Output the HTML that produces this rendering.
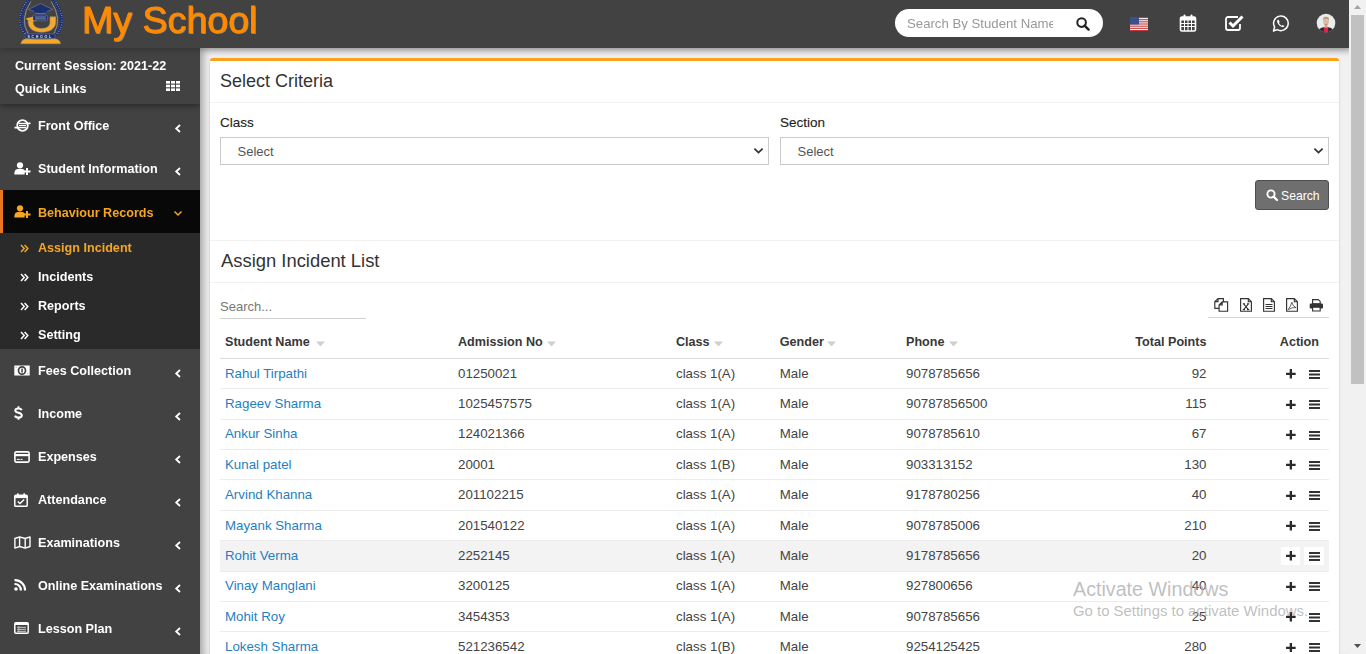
<!DOCTYPE html>
<html><head><meta charset="utf-8">
<style>
*{box-sizing:border-box;margin:0;padding:0}
html,body{width:1366px;height:654px;overflow:hidden;background:#f1f1f1;font-family:"Liberation Sans",sans-serif;}
.a{position:absolute;white-space:nowrap;line-height:1}
#hdr{position:absolute;left:0;top:0;width:1349px;height:48px;background:#424242;z-index:5;box-shadow:0 2px 6px rgba(0,0,0,.2)}
#sb{position:absolute;left:0;top:0;width:200px;height:654px;will-change:transform;background:#424242;z-index:4;overflow:hidden}
#main{position:absolute;left:200px;top:48px;width:1149px;height:606px;background:#f1f1f1;overflow:hidden;box-shadow:inset 6px 4px 8px -3px rgba(0,0,0,.35)}
#scroll{position:absolute;left:1349px;top:0;width:17px;height:654px;background:#f1f1f1;z-index:6}
#box{position:absolute;left:10px;top:10px;width:1129px;height:700px;background:#fff;border-top:3px solid #f9a11b;border-radius:3px;box-shadow:0 1px 2px rgba(0,0,0,.25)}
.hl{position:absolute;left:0;width:1129px;height:1px;background:#f0f0f0}
#ct{position:absolute;left:0;top:0;width:1349px;height:654px;z-index:3;overflow:hidden}
.ln{position:absolute;left:210px;width:1129px;height:1px;background:#f2f2f2}
.rl{position:absolute;left:220px;width:1109px;height:1px;background:#ececec}
.sel{position:absolute;top:137px;height:28px;border:1px solid #cacaca;background:#fff}
</style></head><body>

<div id="hdr">
  <svg style="position:absolute;left:0;top:0" width="80" height="48" viewBox="0 0 80 48">
    <path d="M28 33.5 Q19.5 19 30.8 1.5 M54 33.5 Q62.5 19 51.2 1.5" fill="none" stroke="#9a9a9a" stroke-width="0.9"/>
    <path d="M25.2 33.5 Q15.2 19 28 1.2 M56.8 33.5 Q66.8 19 54 1.2" fill="none" stroke="#1d2f6f" stroke-width="3.8" stroke-linecap="round"/>
    <path d="M25.2 33.5 Q15.2 19 28 1.2 M56.8 33.5 Q66.8 19 54 1.2" fill="none" stroke="#c8cde0" stroke-width="3" stroke-dasharray="0.7 1.6" opacity="0.75"/>
    <path d="M25.4 33 Q15.6 19 28.2 1.6 M56.6 33 Q66.4 19 53.8 1.6" fill="none" stroke="#1d2f6f" stroke-width="1.2"/>
    <path fill="#f6a829" stroke="#8f8f8f" stroke-width="0.5" d="M28 20 C27.5 29 34 32.2 41.7 32.2 C50 32.2 56 28.5 55.8 21 L55.8 16.8 L50 16.8 L50 22 C50 26.5 46.5 28.4 41.7 28.4 C36.5 28.4 33.2 26 33.2 22.5 L33.2 21 Z"/>
    <path d="M25.5 18.5 L37 15.8 L37 21 L33.2 21.2 L28 20.2 Z" fill="#f6a829"/>
    <path d="M28.2 9.5 L40.5 3.6 L52.8 9.5 L40.5 13.6 Z" fill="#1d2f6f" stroke="#8f96a8" stroke-width="0.5"/>
    <path d="M34 10.8 L47 10.8 L47 14.2 Q40.5 15.4 34 14.2 Z" fill="#1d2f6f"/>
    <path d="M34.5 13.1 Q40.5 14.2 46.5 13.1" fill="none" stroke="#9aa3bd" stroke-width="0.6"/>
    <rect x="33" y="15" width="14.6" height="5.8" rx="1.6" fill="#1d2f6f" stroke="#9aa3bd" stroke-width="0.4"/>
    <path d="M35 17 H46 M35 18.9 H46" stroke="#c3c9dc" stroke-width="0.6"/>
    <rect x="25.2" y="34" width="30" height="4.6" rx="1.2" fill="#1d2f6f" stroke="#8f8f8f" stroke-width="0.4"/>
    <text x="40.2" y="37.9" font-size="3.6" font-family="Liberation Sans" font-weight="bold" fill="#dfe3ee" text-anchor="middle" letter-spacing="1.7">SCHOOL</text>
    <path d="M20.8 43.8 Q21.5 39.5 26 38.8 Q40.5 39.8 55 38.8 Q60 39.5 60.6 43.8 Z" fill="#f6a829" stroke="#8a8a8a" stroke-width="0.5"/>
  </svg>
  <div class="a" style="left:82px;top:0px;font-size:37.6px;line-height:40px;color:#ff8a00;-webkit-text-stroke:0.9px #ff8a00;text-shadow:1px 1px 0 rgba(150,150,150,.8)">My School</div>
  <div style="position:absolute;left:895px;top:9px;width:208px;height:28px;border-radius:14px;background:#fff;overflow:hidden">
    <div class="a" style="left:12px;top:8px;font-size:13.2px;color:#999;width:146px;overflow:hidden">Search By Student Name</div>
    <svg style="position:absolute;left:181px;top:8px" width="14" height="14" viewBox="0 0 14 14"><circle cx="5.6" cy="5.6" r="4.3" fill="none" stroke="#222" stroke-width="2"/><path d="M8.6 8.6 L12.6 12.6" stroke="#222" stroke-width="2.4" stroke-linecap="round"/></svg>
  </div>
  <svg style="position:absolute;left:1130px;top:17px" width="18" height="14" viewBox="0 0 18 14">
    <rect width="18" height="14" fill="#fff"/>
    <g fill="#c0393b"><rect y="0" width="18" height="1.1"/><rect y="2.15" width="18" height="1.1"/><rect y="4.3" width="18" height="1.1"/><rect y="6.45" width="18" height="1.1"/><rect y="8.6" width="18" height="1.1"/><rect y="10.75" width="18" height="1.1"/><rect y="12.9" width="18" height="1.1"/></g>
    <rect width="9" height="7.5" fill="#3b4f8c"/>
  </svg>
  <svg style="position:absolute;left:1179px;top:14px" width="18" height="18" viewBox="0 0 18 18">
    <rect x="1.5" y="3" width="15" height="14" rx="1.5" fill="none" stroke="#fff" stroke-width="1.6"/>
    <rect x="1.5" y="3" width="15" height="3.5" fill="#fff"/>
    <rect x="4.5" y="0.5" width="2" height="4" rx="1" fill="#fff"/><rect x="11.5" y="0.5" width="2" height="4" rx="1" fill="#fff"/>
    <g fill="#fff"><rect x="1.5" y="9" width="15" height="1"/><rect x="1.5" y="12" width="15" height="1"/><rect x="5" y="6" width="1" height="11"/><rect x="8.5" y="6" width="1" height="11"/><rect x="12" y="6" width="1" height="11"/></g>
  </svg>
  <svg style="position:absolute;left:1225px;top:15px" width="19" height="16" viewBox="0 0 19 16">
    <path d="M13 2 H3 A2 2 0 0 0 1 4 V13 A2 2 0 0 0 3 15 H13 A2 2 0 0 0 15 13 V9" fill="none" stroke="#fff" stroke-width="1.8"/>
    <path d="M4.5 7.5 L8 11 L17.5 1.5" fill="none" stroke="#fff" stroke-width="3"/>
  </svg>
  <svg style="position:absolute;left:1272px;top:15px" width="17" height="17" viewBox="0 0 17 17">
    <path d="M1.5 16 L2.6 12 A7.3 7.3 0 1 1 5.2 14.6 Z" fill="none" stroke="#fff" stroke-width="1.5" stroke-linejoin="round"/>
    <path d="M6 4.8 C5 5.2 4.8 6.5 5.5 8 C6.5 10 8 11.3 10 12 C11.3 12.4 12 11.8 12.3 11 L10.8 10 L9.8 10.7 C8.6 10.2 7.5 9 7 8 L7.6 7 L6.8 4.9 Z" fill="#fff"/>
  </svg>
  <svg style="position:absolute;left:1316px;top:13px" width="20" height="20" viewBox="0 0 20 20">
    <defs><clipPath id="av"><circle cx="10" cy="10" r="9.3"/></clipPath></defs>
    <g clip-path="url(#av)">
      <rect width="20" height="20" fill="#ebebeb"/>
      <path d="M1 20 Q2.5 14.8 8 14.2 L12 14.2 Q17.5 14.8 19 20 Z" fill="#2a2a2a"/>
      <path d="M7.6 20 L8 14.6 L12 14.6 L12.4 20 Z" fill="#e8204a"/>
      <rect x="8.6" y="11" width="2.8" height="3.8" fill="#c9a58c"/>
      <ellipse cx="10" cy="8.3" rx="2.9" ry="3.9" fill="#dcbaa3"/>
      <path d="M7 7.2 Q6.8 3.8 10 3.8 Q13.2 3.8 13 7.2 Q12.2 5.4 10 5.5 Q7.8 5.4 7 7.2Z" fill="#b89470"/>
      <path d="M8.6 11.2 Q10 12 11.4 11.2" fill="none" stroke="#8a6a5a" stroke-width="0.5"/>
    </g>
  </svg>
</div>

<div id="sb">
<div style="position:absolute;left:0;top:48px;width:200px;height:56px;background:#424242;box-shadow:0 3px 5px rgba(0,0,0,.3);z-index:1"></div>
<div style="position:absolute;left:0;top:48px;width:200px;height:56px;z-index:2">
</div>
<div class="a" style="left:15px;top:59.53px;font-size:12.6px;color:#fff;font-weight:bold;z-index:3">Current Session: 2021-22</div>
<div class="a" style="left:15px;top:83.23px;font-size:12.6px;color:#fff;font-weight:bold;z-index:3">Quick Links</div>
<svg style="position:absolute;left:166px;top:81px;z-index:3" width="14" height="10" viewBox="0 0 14 10"><g fill="#fff"><rect x="0" y="0" width="4" height="2.6"/><rect x="5" y="0" width="4" height="2.6"/><rect x="10" y="0" width="4" height="2.6"/><rect x="0" y="3.7" width="4" height="2.6"/><rect x="5" y="3.7" width="4" height="2.6"/><rect x="10" y="3.7" width="4" height="2.6"/><rect x="0" y="7.4" width="4" height="2.6"/><rect x="5" y="7.4" width="4" height="2.6"/><rect x="10" y="7.4" width="4" height="2.6"/></g></svg>
<div class="a" style="left:38px;top:120.33px;font-size:12.6px;color:#fff;font-weight:bold;">Front Office</div>
<svg style="position:absolute;left:14px;top:119px" width="17" height="13" viewBox="0 0 17 13"><circle cx="8.5" cy="6.5" r="5.3" fill="none" stroke="#fff" stroke-width="1.8"/><rect x="5" y="3.8" width="7" height="1.3" fill="#fff"/><rect x="5" y="5.9" width="7" height="1.3" fill="#fff"/><rect x="5" y="8" width="7" height="1.3" fill="#fff"/><path d="M0.5 8.6 L5 8.6 M12 4.4 L16.5 4.4" stroke="#fff" stroke-width="1.6"/></svg>
<svg style="position:absolute;left:174px;top:124px" width="8" height="9" viewBox="0 0 8 9"><path d="M6 1 L2.2 4.5 L6 8" fill="none" stroke="#fff" stroke-width="1.8"/></svg>
<div class="a" style="left:38px;top:163.33px;font-size:12.6px;color:#fff;font-weight:bold;">Student Information</div>
<svg style="position:absolute;left:14px;top:162px" width="17" height="13" viewBox="0 0 17 13"><circle cx="6" cy="3.3" r="3.1" fill="#fff"/><path d="M0.3 12.5 Q0.3 7.4 3.5 7 L8.5 7 Q10 7.2 10.6 8.2 L10.6 12.5 Z" fill="#fff"/><path d="M9.5 9.5 H16.5 M13 6 V13" stroke="#fff" stroke-width="2"/></svg>
<svg style="position:absolute;left:174px;top:167px" width="8" height="9" viewBox="0 0 8 9"><path d="M6 1 L2.2 4.5 L6 8" fill="none" stroke="#fff" stroke-width="1.8"/></svg>
<div style="position:absolute;left:0;top:190px;width:200px;height:43px;background:#080808;border-left:3px solid #e8761e"></div>
<div class="a" style="left:38px;top:206.83px;font-size:12.6px;color:#f5a623;font-weight:bold;">Behaviour Records</div>
<svg style="position:absolute;left:14px;top:205px" width="17" height="13" viewBox="0 0 17 13"><circle cx="6" cy="3.3" r="3.1" fill="#f5a623"/><path d="M0.3 12.5 Q0.3 7.4 3.5 7 L8.5 7 Q10 7.2 10.6 8.2 L10.6 12.5 Z" fill="#f5a623"/><path d="M9.5 9.5 H16.5 M13 6 V13" stroke="#f5a623" stroke-width="2"/></svg>
<svg style="position:absolute;left:173px;top:210px" width="10" height="7" viewBox="0 0 10 7"><path d="M1.5 1.5 L5 5 L8.5 1.5" fill="none" stroke="#f5a623" stroke-width="1.5"/></svg>
<div style="position:absolute;left:0;top:233px;width:200px;height:116px;background:#2a2a2a"></div>
<div class="a" style="left:38px;top:242.13px;font-size:12.6px;color:#f5a623;font-weight:bold;">Assign Incident</div>
<svg style="position:absolute;left:20px;top:243.6px" width="9" height="9" viewBox="0 0 9 9"><path d="M1 1 L4.2 4.5 L1 8 M4.6 1 L7.8 4.5 L4.6 8" fill="none" stroke="#f5a623" stroke-width="1.5"/></svg>
<div class="a" style="left:38px;top:271.13px;font-size:12.6px;color:#fff;font-weight:bold;">Incidents</div>
<svg style="position:absolute;left:20px;top:272.6px" width="9" height="9" viewBox="0 0 9 9"><path d="M1 1 L4.2 4.5 L1 8 M4.6 1 L7.8 4.5 L4.6 8" fill="none" stroke="#fff" stroke-width="1.5"/></svg>
<div class="a" style="left:38px;top:300.13px;font-size:12.6px;color:#fff;font-weight:bold;">Reports</div>
<svg style="position:absolute;left:20px;top:301.6px" width="9" height="9" viewBox="0 0 9 9"><path d="M1 1 L4.2 4.5 L1 8 M4.6 1 L7.8 4.5 L4.6 8" fill="none" stroke="#fff" stroke-width="1.5"/></svg>
<div class="a" style="left:38px;top:329.13px;font-size:12.6px;color:#fff;font-weight:bold;">Setting</div>
<svg style="position:absolute;left:20px;top:330.6px" width="9" height="9" viewBox="0 0 9 9"><path d="M1 1 L4.2 4.5 L1 8 M4.6 1 L7.8 4.5 L4.6 8" fill="none" stroke="#fff" stroke-width="1.5"/></svg>
<div class="a" style="left:38px;top:365.33px;font-size:12.6px;color:#fff;font-weight:bold;">Fees Collection</div>
<svg style="position:absolute;left:14px;top:365px" width="16" height="11" viewBox="0 0 16 11"><rect x="0.3" y="0.5" width="15.4" height="10" fill="#fff"/><ellipse cx="8" cy="5.5" rx="3.5" ry="3.7" fill="none" stroke="#424242" stroke-width="1.7"/><rect x="7.3" y="3.6" width="1.5" height="3.9" fill="#424242"/><rect x="1.6" y="1.8" width="1.2" height="1.2" fill="#bbb"/><rect x="13.2" y="8" width="1.2" height="1.2" fill="#bbb"/></svg>
<svg style="position:absolute;left:174px;top:369px" width="8" height="9" viewBox="0 0 8 9"><path d="M6 1 L2.2 4.5 L6 8" fill="none" stroke="#fff" stroke-width="1.8"/></svg>
<div class="a" style="left:38px;top:408.33px;font-size:12.6px;color:#fff;font-weight:bold;">Income</div>
<svg style="position:absolute;left:14px;top:406px" width="9" height="14" viewBox="0 0 9 14"><path d="M7.6 4.2 Q7.2 2.4 4.5 2.4 Q1.3 2.4 1.3 4.4 Q1.3 6 4.5 6.8 Q7.8 7.6 7.8 9.5 Q7.8 11.6 4.5 11.6 Q1.6 11.6 1 9.6" fill="none" stroke="#fff" stroke-width="2"/><path d="M4.5 0.3 V2.6 M4.5 11.4 V13.7" stroke="#fff" stroke-width="1.8"/></svg>
<svg style="position:absolute;left:174px;top:412px" width="8" height="9" viewBox="0 0 8 9"><path d="M6 1 L2.2 4.5 L6 8" fill="none" stroke="#fff" stroke-width="1.8"/></svg>
<div class="a" style="left:38px;top:451.33px;font-size:12.6px;color:#fff;font-weight:bold;">Expenses</div>
<svg style="position:absolute;left:14px;top:451px" width="16" height="12" viewBox="0 0 16 12"><rect x="0.9" y="0.9" width="14.2" height="10.2" rx="1.3" fill="none" stroke="#fff" stroke-width="1.6"/><rect x="1" y="3" width="14" height="2.2" fill="#fff"/><rect x="2.8" y="7.9" width="3" height="1" fill="#fff"/><rect x="6.5" y="7.9" width="2" height="1" fill="#fff"/></svg>
<svg style="position:absolute;left:174px;top:455px" width="8" height="9" viewBox="0 0 8 9"><path d="M6 1 L2.2 4.5 L6 8" fill="none" stroke="#fff" stroke-width="1.8"/></svg>
<div class="a" style="left:38px;top:494.33px;font-size:12.6px;color:#fff;font-weight:bold;">Attendance</div>
<svg style="position:absolute;left:14px;top:493px" width="14" height="14" viewBox="0 0 14 14"><rect x="0.8" y="2.3" width="12.4" height="11" rx="1" fill="none" stroke="#fff" stroke-width="1.5"/><rect x="0.8" y="2.3" width="12.4" height="2.8" fill="#fff"/><rect x="3" y="0.3" width="1.6" height="3" fill="#fff"/><rect x="9.4" y="0.3" width="1.6" height="3" fill="#fff"/><path d="M3.8 8.5 L6 10.6 L10.2 6.6" fill="none" stroke="#fff" stroke-width="1.4"/></svg>
<svg style="position:absolute;left:174px;top:498px" width="8" height="9" viewBox="0 0 8 9"><path d="M6 1 L2.2 4.5 L6 8" fill="none" stroke="#fff" stroke-width="1.8"/></svg>
<div class="a" style="left:38px;top:537.33px;font-size:12.6px;color:#fff;font-weight:bold;">Examinations</div>
<svg style="position:absolute;left:14px;top:536px" width="17" height="13" viewBox="0 0 17 13"><path d="M0.9 2.5 L5.6 0.9 L11.2 2.5 L16 0.9 L16 10.5 L11.2 12.1 L5.6 10.5 L0.9 12.1 Z M5.6 0.9 V10.5 M11.2 2.5 V12.1" fill="none" stroke="#fff" stroke-width="1.4" stroke-linejoin="round"/></svg>
<svg style="position:absolute;left:174px;top:541px" width="8" height="9" viewBox="0 0 8 9"><path d="M6 1 L2.2 4.5 L6 8" fill="none" stroke="#fff" stroke-width="1.8"/></svg>
<div class="a" style="left:38px;top:580.33px;font-size:12.6px;color:#fff;font-weight:bold;">Online Examinations</div>
<svg style="position:absolute;left:14px;top:579px" width="13" height="12" viewBox="0 0 13 12"><circle cx="2" cy="10" r="1.8" fill="#fff"/><path d="M0.5 5 A6 6 0 0 1 6.8 11.5" fill="none" stroke="#fff" stroke-width="2.2"/><path d="M0.5 1.2 A10 10 0 0 1 11 11.5" fill="none" stroke="#fff" stroke-width="2.2"/></svg>
<svg style="position:absolute;left:174px;top:584px" width="8" height="9" viewBox="0 0 8 9"><path d="M6 1 L2.2 4.5 L6 8" fill="none" stroke="#fff" stroke-width="1.8"/></svg>
<div class="a" style="left:38px;top:623.33px;font-size:12.6px;color:#fff;font-weight:bold;">Lesson Plan</div>
<svg style="position:absolute;left:14px;top:622px" width="15" height="12" viewBox="0 0 15 12"><rect x="0.8" y="0.8" width="13.4" height="10.4" rx="1" fill="none" stroke="#fff" stroke-width="1.5"/><rect x="1" y="1" width="13" height="2" fill="#fff"/><rect x="3" y="4.8" width="9" height="1" fill="#ccc"/><rect x="3" y="6.8" width="9" height="1" fill="#ccc"/><rect x="3" y="8.8" width="9" height="1" fill="#ccc"/><rect x="4.5" y="4" width="0.8" height="6" fill="#ccc"/></svg>
<svg style="position:absolute;left:174px;top:627px" width="8" height="9" viewBox="0 0 8 9"><path d="M6 1 L2.2 4.5 L6 8" fill="none" stroke="#fff" stroke-width="1.8"/></svg>
</div>

<div id="main">
  <div id="box"></div>
</div>
<div id="ct">
<div class="a" style="left:220px;top:72.06px;font-size:18px;color:#333;font-weight:normal;">Select Criteria</div>
<div class="ln" style="top:102px"></div>
<div class="a" style="left:220px;top:115.57px;font-size:13.5px;color:#222;font-weight:normal;-webkit-text-stroke:0.12px #222">Class</div>
<div class="a" style="left:780px;top:115.57px;font-size:13.5px;color:#222;font-weight:normal;-webkit-text-stroke:0.12px #222">Section</div>
<div class="sel" style="left:220px;width:549px"></div>
<div class="a" style="left:237.5px;top:145.00px;font-size:13px;color:#555;font-weight:normal;">Select</div>
<svg style="position:absolute;left:753px;top:147px" width="11" height="8" viewBox="0 0 11 8"><path d="M1.4 1.6 L5.5 5.6 L9.6 1.6" fill="none" stroke="#333" stroke-width="1.7"/></svg>
<div class="sel" style="left:780px;width:549px"></div>
<div class="a" style="left:797.5px;top:145.00px;font-size:13px;color:#555;font-weight:normal;">Select</div>
<svg style="position:absolute;left:1313px;top:147px" width="11" height="8" viewBox="0 0 11 8"><path d="M1.4 1.6 L5.5 5.6 L9.6 1.6" fill="none" stroke="#333" stroke-width="1.7"/></svg>
<div style="position:absolute;left:1255px;top:180px;width:74px;height:30px;background:#6f6f6f;border:1px solid #4f4f4f;border-radius:3px"></div>
<svg style="position:absolute;left:1266px;top:189px" width="12" height="12" viewBox="0 0 12 12"><circle cx="5" cy="5" r="3.6" fill="none" stroke="#fff" stroke-width="1.9"/><path d="M7.6 7.6 L11 11" stroke="#fff" stroke-width="2.2" stroke-linecap="round"/></svg>
<div class="a" style="left:1281px;top:190.33px;font-size:12.2px;color:#fff;font-weight:normal;">Search</div>
<div class="ln" style="top:240px"></div>
<div class="a" style="left:221px;top:252.02px;font-size:18.4px;color:#333;font-weight:normal;">Assign Incident List</div>
<div class="ln" style="top:282px"></div>
<div class="a" style="left:220px;top:300.00px;font-size:13px;color:#777;font-weight:normal;">Search...</div>
<div style="position:absolute;left:220px;top:318px;width:146px;height:1px;background:#d0d0d0"></div>
<div style="position:absolute;left:1208px;top:317px;width:121px;height:1px;background:#d6d6d6"></div>
<svg style="position:absolute;left:1213px;top:297px" width="112" height="16" viewBox="0 0 112 16">
<g fill="#fff" stroke="#333" stroke-width="1.15" stroke-linejoin="miter">
<path d="M1.8 4.6 L5 1.6 H10.4 V11.4 H1.8 Z M5 1.6 V4.6 H1.8"/>
<path d="M6.1 7.9 L9.2 4.9 H14.6 V14.2 H6.1 Z M9.2 4.9 V7.9 H6.1"/>
<path d="M27.6 1.6 H35.3 L38.4 4.7 V14.2 H27.6 Z M35.3 1.6 V4.7 H38.4"/>
<path d="M50.6 1.6 H58.3 L61.4 4.7 V14.2 H50.6 Z M58.3 1.6 V4.7 H61.4"/>
<path d="M73.6 1.6 H81.3 L84.4 4.7 V14.2 H73.6 Z M81.3 1.6 V4.7 H84.4"/>
</g>
<path d="M30.6 6.8 L35.4 12.6 M35.4 6.8 L30.6 12.6 M29.8 6.8 H32 M34 6.8 H36.2 M29.8 12.6 H32 M34 12.6 H36.2" stroke="#333" stroke-width="1.1"/>
<path d="M52.5 7.5 H59.5 M52.5 9.5 H59.5 M52.5 11.5 H59.5" stroke="#333" stroke-width="1"/>
<path d="M75.2 12.6 Q77.8 9.5 78.8 5.2 Q79.8 9.6 83 10.6 Q79 10.2 75.2 12.6 Z" fill="none" stroke="#333" stroke-width="0.75"/>
<path d="M99.6 2.6 H105.2 L107.2 4.4 V6.8 H99.6 Z" fill="#fff" stroke="#333" stroke-width="1.15"/>
<rect x="96.7" y="6.5" width="13.3" height="5" rx="1.2" fill="#333"/>
<path d="M99.6 10.2 H107.2 V14 H99.6 Z" fill="#fff" stroke="#333" stroke-width="1.15"/>
</svg>
<div class="a" style="left:225px;top:336.2px;font-size:12.6px;color:#383838;font-weight:bold;">Student Name</div>
<svg style="position:absolute;left:315.5px;top:341px" width="9" height="6" viewBox="0 0 9 6"><path d="M0 0.5 H9 L4.5 5.5 Z" fill="#d0d0d0"/></svg>
<div class="a" style="left:458px;top:336.2px;font-size:12.6px;color:#383838;font-weight:bold;">Admission No</div>
<svg style="position:absolute;left:546.6px;top:341px" width="9" height="6" viewBox="0 0 9 6"><path d="M0 0.5 H9 L4.5 5.5 Z" fill="#d0d0d0"/></svg>
<div class="a" style="left:676px;top:336.2px;font-size:12.6px;color:#383838;font-weight:bold;">Class</div>
<svg style="position:absolute;left:713.5px;top:341px" width="9" height="6" viewBox="0 0 9 6"><path d="M0 0.5 H9 L4.5 5.5 Z" fill="#d0d0d0"/></svg>
<div class="a" style="left:779.8px;top:336.2px;font-size:12.6px;color:#383838;font-weight:bold;">Gender</div>
<svg style="position:absolute;left:827px;top:341px" width="9" height="6" viewBox="0 0 9 6"><path d="M0 0.5 H9 L4.5 5.5 Z" fill="#d0d0d0"/></svg>
<div class="a" style="left:906px;top:336.2px;font-size:12.6px;color:#383838;font-weight:bold;">Phone</div>
<svg style="position:absolute;left:949px;top:341px" width="9" height="6" viewBox="0 0 9 6"><path d="M0 0.5 H9 L4.5 5.5 Z" fill="#d0d0d0"/></svg>
<div class="a" style="right:142.5px;top:336.2px;font-size:12.6px;color:#383838;font-weight:bold;text-align:right;">Total Points</div>
<div class="a" style="right:30px;top:336.2px;font-size:12.6px;color:#383838;font-weight:bold;text-align:right;">Action</div>
<div style="position:absolute;left:220px;top:358px;width:1109px;height:1px;background:#dcdcdc"></div>
<div class="a" style="left:225px;top:366.74px;font-size:13.3px;color:#1f7fc0;font-weight:normal;">Rahul Tirpathi</div>
<div class="a" style="left:458px;top:366.74px;font-size:13.3px;color:#444;font-weight:normal;">01250021</div>
<div class="a" style="left:676px;top:366.74px;font-size:13.3px;color:#444;font-weight:normal;">class 1(A)</div>
<div class="a" style="left:779.8px;top:366.74px;font-size:13.3px;color:#444;font-weight:normal;">Male</div>
<div class="a" style="left:906px;top:366.74px;font-size:13.3px;color:#444;font-weight:normal;">9078785656</div>
<div class="a" style="right:142.5px;top:366.74px;font-size:13.3px;color:#444;font-weight:normal;text-align:right;">92</div>
<svg style="position:absolute;left:1286px;top:369.30px" width="9.7" height="9.6" viewBox="0 0 10 10"><path d="M0 5 H10 M5 0 V10" stroke="#2a2a2a" stroke-width="2.4"/></svg>
<svg style="position:absolute;left:1308.5px;top:369.90px" width="11" height="9" viewBox="0 0 11 9"><path d="M0 1 H11 M0 4.5 H11 M0 8 H11" stroke="#333" stroke-width="1.9"/></svg>
<div class="rl" style="top:388.36px"></div>
<div class="a" style="left:225px;top:397.10px;font-size:13.3px;color:#1f7fc0;font-weight:normal;">Rageev Sharma</div>
<div class="a" style="left:458px;top:397.10px;font-size:13.3px;color:#444;font-weight:normal;">1025457575</div>
<div class="a" style="left:676px;top:397.10px;font-size:13.3px;color:#444;font-weight:normal;">class 1(A)</div>
<div class="a" style="left:779.8px;top:397.10px;font-size:13.3px;color:#444;font-weight:normal;">Male</div>
<div class="a" style="left:906px;top:397.10px;font-size:13.3px;color:#444;font-weight:normal;">90787856500</div>
<div class="a" style="right:142.5px;top:397.10px;font-size:13.3px;color:#444;font-weight:normal;text-align:right;">115</div>
<svg style="position:absolute;left:1286px;top:399.66px" width="9.7" height="9.6" viewBox="0 0 10 10"><path d="M0 5 H10 M5 0 V10" stroke="#2a2a2a" stroke-width="2.4"/></svg>
<svg style="position:absolute;left:1308.5px;top:400.26px" width="11" height="9" viewBox="0 0 11 9"><path d="M0 1 H11 M0 4.5 H11 M0 8 H11" stroke="#333" stroke-width="1.9"/></svg>
<div class="rl" style="top:418.72px"></div>
<div class="a" style="left:225px;top:427.46px;font-size:13.3px;color:#1f7fc0;font-weight:normal;">Ankur Sinha</div>
<div class="a" style="left:458px;top:427.46px;font-size:13.3px;color:#444;font-weight:normal;">124021366</div>
<div class="a" style="left:676px;top:427.46px;font-size:13.3px;color:#444;font-weight:normal;">class 1(A)</div>
<div class="a" style="left:779.8px;top:427.46px;font-size:13.3px;color:#444;font-weight:normal;">Male</div>
<div class="a" style="left:906px;top:427.46px;font-size:13.3px;color:#444;font-weight:normal;">9078785610</div>
<div class="a" style="right:142.5px;top:427.46px;font-size:13.3px;color:#444;font-weight:normal;text-align:right;">67</div>
<svg style="position:absolute;left:1286px;top:430.02px" width="9.7" height="9.6" viewBox="0 0 10 10"><path d="M0 5 H10 M5 0 V10" stroke="#2a2a2a" stroke-width="2.4"/></svg>
<svg style="position:absolute;left:1308.5px;top:430.62px" width="11" height="9" viewBox="0 0 11 9"><path d="M0 1 H11 M0 4.5 H11 M0 8 H11" stroke="#333" stroke-width="1.9"/></svg>
<div class="rl" style="top:449.08px"></div>
<div class="a" style="left:225px;top:457.82px;font-size:13.3px;color:#1f7fc0;font-weight:normal;">Kunal patel</div>
<div class="a" style="left:458px;top:457.82px;font-size:13.3px;color:#444;font-weight:normal;">20001</div>
<div class="a" style="left:676px;top:457.82px;font-size:13.3px;color:#444;font-weight:normal;">class 1(B)</div>
<div class="a" style="left:779.8px;top:457.82px;font-size:13.3px;color:#444;font-weight:normal;">Male</div>
<div class="a" style="left:906px;top:457.82px;font-size:13.3px;color:#444;font-weight:normal;">903313152</div>
<div class="a" style="right:142.5px;top:457.82px;font-size:13.3px;color:#444;font-weight:normal;text-align:right;">130</div>
<svg style="position:absolute;left:1286px;top:460.38px" width="9.7" height="9.6" viewBox="0 0 10 10"><path d="M0 5 H10 M5 0 V10" stroke="#2a2a2a" stroke-width="2.4"/></svg>
<svg style="position:absolute;left:1308.5px;top:460.98px" width="11" height="9" viewBox="0 0 11 9"><path d="M0 1 H11 M0 4.5 H11 M0 8 H11" stroke="#333" stroke-width="1.9"/></svg>
<div class="rl" style="top:479.44px"></div>
<div class="a" style="left:225px;top:488.18px;font-size:13.3px;color:#1f7fc0;font-weight:normal;">Arvind Khanna</div>
<div class="a" style="left:458px;top:488.18px;font-size:13.3px;color:#444;font-weight:normal;">201102215</div>
<div class="a" style="left:676px;top:488.18px;font-size:13.3px;color:#444;font-weight:normal;">class 1(A)</div>
<div class="a" style="left:779.8px;top:488.18px;font-size:13.3px;color:#444;font-weight:normal;">Male</div>
<div class="a" style="left:906px;top:488.18px;font-size:13.3px;color:#444;font-weight:normal;">9178780256</div>
<div class="a" style="right:142.5px;top:488.18px;font-size:13.3px;color:#444;font-weight:normal;text-align:right;">40</div>
<svg style="position:absolute;left:1286px;top:490.74px" width="9.7" height="9.6" viewBox="0 0 10 10"><path d="M0 5 H10 M5 0 V10" stroke="#2a2a2a" stroke-width="2.4"/></svg>
<svg style="position:absolute;left:1308.5px;top:491.34px" width="11" height="9" viewBox="0 0 11 9"><path d="M0 1 H11 M0 4.5 H11 M0 8 H11" stroke="#333" stroke-width="1.9"/></svg>
<div class="rl" style="top:509.80px"></div>
<div class="a" style="left:225px;top:518.54px;font-size:13.3px;color:#1f7fc0;font-weight:normal;">Mayank Sharma</div>
<div class="a" style="left:458px;top:518.54px;font-size:13.3px;color:#444;font-weight:normal;">201540122</div>
<div class="a" style="left:676px;top:518.54px;font-size:13.3px;color:#444;font-weight:normal;">class 1(A)</div>
<div class="a" style="left:779.8px;top:518.54px;font-size:13.3px;color:#444;font-weight:normal;">Male</div>
<div class="a" style="left:906px;top:518.54px;font-size:13.3px;color:#444;font-weight:normal;">9078785006</div>
<div class="a" style="right:142.5px;top:518.54px;font-size:13.3px;color:#444;font-weight:normal;text-align:right;">210</div>
<svg style="position:absolute;left:1286px;top:521.10px" width="9.7" height="9.6" viewBox="0 0 10 10"><path d="M0 5 H10 M5 0 V10" stroke="#2a2a2a" stroke-width="2.4"/></svg>
<svg style="position:absolute;left:1308.5px;top:521.70px" width="11" height="9" viewBox="0 0 11 9"><path d="M0 1 H11 M0 4.5 H11 M0 8 H11" stroke="#333" stroke-width="1.9"/></svg>
<div style="position:absolute;left:220px;top:540.66px;width:1109px;height:30.36px;background:#f3f3f3"></div>
<div style="position:absolute;left:1281px;top:546.90px;width:19px;height:18px;background:#fff"></div>
<div style="position:absolute;left:1304px;top:546.9px;width:20px;height:18px;background:#fff"></div>
<div class="rl" style="top:540.16px"></div>
<div class="a" style="left:225px;top:548.90px;font-size:13.3px;color:#1f7fc0;font-weight:normal;">Rohit Verma</div>
<div class="a" style="left:458px;top:548.90px;font-size:13.3px;color:#444;font-weight:normal;">2252145</div>
<div class="a" style="left:676px;top:548.90px;font-size:13.3px;color:#444;font-weight:normal;">class 1(A)</div>
<div class="a" style="left:779.8px;top:548.90px;font-size:13.3px;color:#444;font-weight:normal;">Male</div>
<div class="a" style="left:906px;top:548.90px;font-size:13.3px;color:#444;font-weight:normal;">9178785656</div>
<div class="a" style="right:142.5px;top:548.90px;font-size:13.3px;color:#444;font-weight:normal;text-align:right;">20</div>
<svg style="position:absolute;left:1286px;top:551.46px" width="9.7" height="9.6" viewBox="0 0 10 10"><path d="M0 5 H10 M5 0 V10" stroke="#2a2a2a" stroke-width="2.4"/></svg>
<svg style="position:absolute;left:1308.5px;top:552.06px" width="11" height="9" viewBox="0 0 11 9"><path d="M0 1 H11 M0 4.5 H11 M0 8 H11" stroke="#333" stroke-width="1.9"/></svg>
<div class="rl" style="top:570.52px"></div>
<div class="a" style="left:225px;top:579.26px;font-size:13.3px;color:#1f7fc0;font-weight:normal;">Vinay Manglani</div>
<div class="a" style="left:458px;top:579.26px;font-size:13.3px;color:#444;font-weight:normal;">3200125</div>
<div class="a" style="left:676px;top:579.26px;font-size:13.3px;color:#444;font-weight:normal;">class 1(A)</div>
<div class="a" style="left:779.8px;top:579.26px;font-size:13.3px;color:#444;font-weight:normal;">Male</div>
<div class="a" style="left:906px;top:579.26px;font-size:13.3px;color:#444;font-weight:normal;">927800656</div>
<div class="a" style="right:142.5px;top:579.26px;font-size:13.3px;color:#444;font-weight:normal;text-align:right;">40</div>
<svg style="position:absolute;left:1286px;top:581.82px" width="9.7" height="9.6" viewBox="0 0 10 10"><path d="M0 5 H10 M5 0 V10" stroke="#2a2a2a" stroke-width="2.4"/></svg>
<svg style="position:absolute;left:1308.5px;top:582.42px" width="11" height="9" viewBox="0 0 11 9"><path d="M0 1 H11 M0 4.5 H11 M0 8 H11" stroke="#333" stroke-width="1.9"/></svg>
<div class="rl" style="top:600.88px"></div>
<div class="a" style="left:225px;top:609.62px;font-size:13.3px;color:#1f7fc0;font-weight:normal;">Mohit Roy</div>
<div class="a" style="left:458px;top:609.62px;font-size:13.3px;color:#444;font-weight:normal;">3454353</div>
<div class="a" style="left:676px;top:609.62px;font-size:13.3px;color:#444;font-weight:normal;">class 1(A)</div>
<div class="a" style="left:779.8px;top:609.62px;font-size:13.3px;color:#444;font-weight:normal;">Male</div>
<div class="a" style="left:906px;top:609.62px;font-size:13.3px;color:#444;font-weight:normal;">9078785656</div>
<div class="a" style="right:142.5px;top:609.62px;font-size:13.3px;color:#444;font-weight:normal;text-align:right;">25</div>
<svg style="position:absolute;left:1286px;top:612.18px" width="9.7" height="9.6" viewBox="0 0 10 10"><path d="M0 5 H10 M5 0 V10" stroke="#2a2a2a" stroke-width="2.4"/></svg>
<svg style="position:absolute;left:1308.5px;top:612.78px" width="11" height="9" viewBox="0 0 11 9"><path d="M0 1 H11 M0 4.5 H11 M0 8 H11" stroke="#333" stroke-width="1.9"/></svg>
<div class="rl" style="top:631.24px"></div>
<div class="a" style="left:225px;top:639.98px;font-size:13.3px;color:#1f7fc0;font-weight:normal;">Lokesh Sharma</div>
<div class="a" style="left:458px;top:639.98px;font-size:13.3px;color:#444;font-weight:normal;">521236542</div>
<div class="a" style="left:676px;top:639.98px;font-size:13.3px;color:#444;font-weight:normal;">class 1(B)</div>
<div class="a" style="left:779.8px;top:639.98px;font-size:13.3px;color:#444;font-weight:normal;">Male</div>
<div class="a" style="left:906px;top:639.98px;font-size:13.3px;color:#444;font-weight:normal;">9254125425</div>
<div class="a" style="right:142.5px;top:639.98px;font-size:13.3px;color:#444;font-weight:normal;text-align:right;">280</div>
<svg style="position:absolute;left:1286px;top:642.54px" width="9.7" height="9.6" viewBox="0 0 10 10"><path d="M0 5 H10 M5 0 V10" stroke="#2a2a2a" stroke-width="2.4"/></svg>
<svg style="position:absolute;left:1308.5px;top:643.14px" width="11" height="9" viewBox="0 0 11 9"><path d="M0 1 H11 M0 4.5 H11 M0 8 H11" stroke="#333" stroke-width="1.9"/></svg>
</div>

<div class="a" style="left:1073px;top:578px;font-size:19.7px;color:rgba(170,170,170,.75);z-index:20;line-height:22px">Activate Windows</div>
<div class="a" style="left:1073px;top:603px;font-size:14.9px;color:rgba(170,170,170,.75);z-index:20;line-height:17px">Go to Settings to activate Windows.</div>
<div id="scroll">
  <div style="position:absolute;left:2px;top:15px;width:13px;height:369px;background:#c1c1c1"></div>
  <svg style="position:absolute;left:4px;top:4px" width="9" height="6" viewBox="0 0 9 6"><path d="M1 5 L4.5 1 L8 5 Z" fill="#a3a3a3"/></svg>
  <svg style="position:absolute;left:4px;top:643px" width="9" height="6" viewBox="0 0 9 6"><path d="M1 1 L4.5 5 L8 1 Z" fill="#505050"/></svg>
</div>

</body></html>
